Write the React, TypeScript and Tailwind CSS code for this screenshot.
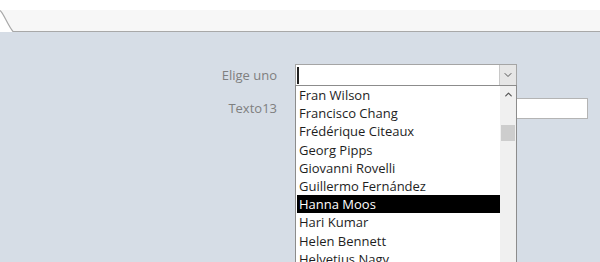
import { ChevronDown, ChevronUp } from 'lucide-react';

const people = [
  'Fran Wilson',
  'Francisco Chang',
  'Frédérique Citeaux',
  'Georg Pipps',
  'Giovanni Rovelli',
  'Guillermo Fernández',
  'Hanna Moos',
  'Hari Kumar',
  'Helen Bennett',
  'Helvetius Nagy',
];

const selected = 'Hanna Moos';

const App: React.FC = () => {
  return (
    <div className="h-[262px] w-[600px] overflow-hidden bg-[#d6dde6] font-['Open_Sans',sans-serif] text-[13px]">
      {/* tab strip */}
      <header className="flex h-[32px] flex-col bg-white">
        <div className="h-[10px]" />
        <div className="flex flex-1">
          <svg width="14" height="22" viewBox="0 0 14 22" className="shrink-0">
            <path d="M0 0 C3 2 8 16 13 21.5 L14 21.5 L14 0 Z" fill="#f7f7f7" />
            <path d="M0 0.5 C3 2 8 16 13 21.5 L14 21.5" fill="none" stroke="#a8a8a8" strokeWidth="1.2" />
          </svg>
          <div className="flex-1 border-b border-[#a8a8a8] bg-[#f7f7f7]" />
        </div>
      </header>

      <main className="flex flex-col gap-[12px] pt-[32px]">
        <div className="flex items-center">
          <label className="w-[277px] text-right leading-[22px] text-[#7f7f7f]">
            Elige uno
          </label>
          <div className="relative ml-[18px] flex h-[22px] w-[222px] border border-[#a5a5a5] bg-white">
            <div className="flex flex-1 items-center pl-[1px]">
              <span className="h-[17px] w-[2px] bg-[#222]" />
            </div>
            <div className="flex w-[17px] items-center justify-center border-l border-[#c8c8c8] bg-[#e6e6e6]">
              <ChevronDown size={12} strokeWidth={2} className="text-[#555]" />
            </div>

            {/* open dropdown list */}
            <div className="absolute left-[-1px] top-[20px] z-10 flex h-[200px] w-[222px] border border-[#8c8c8c] border-b-0 bg-white">
              <ul className="flex flex-1 flex-col pl-[1px]">
                {people.map((p) => (
                  <li
                    key={p}
                    className={`h-[18.2px] shrink-0 pl-[2px] leading-[18px] ${
                      p === selected ? 'bg-black text-white' : 'text-[#1e1e1e]'
                    }`}
                  >
                    {p}
                  </li>
                ))}
              </ul>
              <div className="flex w-[16px] flex-col items-center bg-[#f0f0f0]">
                <div className="flex h-[17px] items-center justify-center">
                  <ChevronUp size={11} strokeWidth={2.6} className="text-[#555]" />
                </div>
                <div className="mt-[22px] h-[16px] w-[14px] bg-[#cdcdcd]" />
              </div>
            </div>
          </div>
        </div>

        <div className="flex items-center">
          <label className="w-[277px] text-right leading-[21px] text-[#7f7f7f]">
            Texto13
          </label>
          <div className="ml-[238px] h-[21px] w-[73px] border border-[#b4b4b4] bg-white" />
        </div>
      </main>
    </div>
  );
};

export default App;
